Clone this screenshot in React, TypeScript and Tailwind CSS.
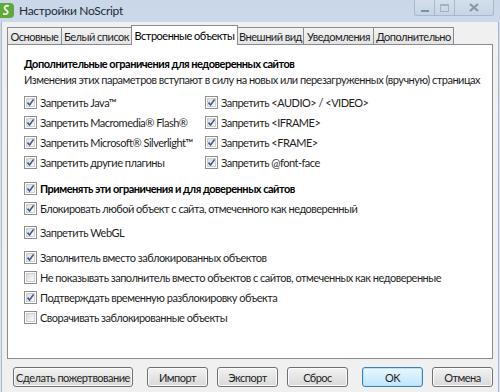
import React from 'react';

const Check: React.FC<{ checked?: boolean }> = ({ checked }) => (
  <span className="relative inline-flex h-[13px] w-[13px] shrink-0 items-center justify-center border border-[#8f8f8f] bg-white">
    <span className="absolute inset-[1px] border border-[#d0d0d0] bg-gradient-to-br from-[#dcdcdc] to-[#fbfbfb]" />
    {checked && (
      <svg viewBox="0 0 9 9" className="relative h-[9px] w-[9px]">
        <path d="M1.5 4.6 L3.6 7 L7.6 1.4" fill="none" stroke="#3f5a8f" strokeWidth="1.6" />
      </svg>
    )}
  </span>
);

const Row: React.FC<{ label: string; checked?: boolean; bold?: boolean; className?: string }> = ({
  label,
  checked = true,
  bold,
  className = '',
}) => (
  <div className={`flex h-[20px] items-center gap-[3px] ${className}`}>
    <Check checked={checked} />
    <span className={`whitespace-nowrap ${bold ? 'font-bold text-black' : 'text-[#1e1e1e]'}`}>{label}</span>
  </div>
);

const Btn: React.FC<{ label: string; w: string; def?: boolean }> = ({ label, w, def }) => (
  <button
    className={`h-[20px] ${w} whitespace-nowrap rounded-[3px] border bg-gradient-to-b text-[#1e1e1e] ${
      def
        ? 'border-[#3c7fb1] from-[#eaf6fd] to-[#bee6fd] shadow-[inset_0_0_0_1px_#b7e4f9]'
        : 'border-[#707070] from-[#f2f2f2] to-[#d9d9d9] shadow-[inset_0_0_0_1px_#fbfbfb]'
    }`}
  >
    {label}
  </button>
);

const tabs: [string, string][] = [
  ['Основные', 'w-[55px]'],
  ['Белый список', 'w-[71px]'],
  ['Встроенные объекты', 'w-[107px]'],
  ['Внешний вид', 'w-[67px]'],
  ['Уведомления', 'w-[71px]'],
  ['Дополнительно', 'w-[81px]'],
];

export default function App() {
  return (
    <div
      className="flex h-[392px] w-[500px] flex-col overflow-hidden bg-gradient-to-b from-[#c9d7e8] via-[#d9e3ef] to-[#dde6f0] text-[11px] leading-none tracking-[-0.5px]"
      style={{ fontFamily: 'Lato, "Noto Sans", sans-serif' }}
    >
      {/* title bar */}
      <div className="flex h-[22px] shrink-0 items-start">
        <div className="mt-[3px] h-[15px] w-[16px]">
          <svg viewBox="0 0 16 15" className="h-[15px] w-[16px]">
            <rect x="-3" y="0" width="17" height="15" rx="4" fill="#5fa83a" />
            <path d="M9 3 C5 2 3 5 6 7 C9 9 8 12 3 11" fill="none" stroke="#e8f5dc" strokeWidth="1.8" />
          </svg>
        </div>
        <span className="ml-[3px] mt-[5px] whitespace-nowrap text-[12px] tracking-[-0.3px] text-[#1e2a3a]">Настройки NoScript</span>
        <div className="ml-auto mr-[6px] flex h-[17px] items-start">
          <div className="flex h-[16px] w-[21px] items-end justify-center rounded-bl-[3px] border border-t-0 border-[#a9b8cb] bg-gradient-to-b from-[#d4dfec] to-[#c6d4e5] pb-[3px]">
            <div className="h-[2px] w-[8px] border border-[#7d8ea5]" />
          </div>
          <div className="flex h-[16px] w-[20px] items-center justify-center border border-l-0 border-t-0 border-[#a9b8cb] bg-gradient-to-b from-[#d4dfec] to-[#c6d4e5]">
            <div className="h-[8px] w-[9px] border border-t-2 border-[#a3b1c3]" />
          </div>
          <div className="flex h-[16px] w-[39px] items-center justify-center rounded-br-[3px] border border-l-0 border-t-0 border-[#a9b8cb] bg-gradient-to-b from-[#d4dfec] to-[#c6d4e5]">
            <svg viewBox="0 0 10 9" className="h-[9px] w-[10px]">
              <path d="M1 1 L9 8 M9 1 L1 8" stroke="#8796ab" strokeWidth="2.2" />
            </svg>
          </div>
        </div>
      </div>

      {/* window client area */}
      <div className="mx-[1px] flex flex-1 flex-col border-l border-r border-[#aab8c9] bg-[#f0f0f0] px-[5px] pb-[6px]">
        {/* tabs */}
        <div className="mt-[5px] flex h-[17px] shrink-0 items-end">
          {tabs.map(([t, w], i) =>
            i === 2 ? (
              <div
                key={t}
                className={`relative z-10 -mb-px -ml-px flex h-[20px] ${w} items-center justify-center whitespace-nowrap border border-b-0 border-[#898c95] bg-white text-black`}
              >
                {t}
              </div>
            ) : (
              <div
                key={t}
                className={`flex h-[17px] ${w} items-center justify-center whitespace-nowrap border border-b-0 border-[#898c95] bg-gradient-to-b from-[#f3f3f3] to-[#e3e3e3] text-[#1e1e1e] ${
                  i > 0 ? '-ml-px' : ''
                }`}
              >
                {t}
              </div>
            ),
          )}
        </div>

        {/* panel */}
        <div className="flex h-[315px] shrink-0 flex-col border border-[#898c95] bg-white pl-[16px] pt-[10px]">
          <div className="flex h-[16px] items-center whitespace-nowrap font-bold text-black">
            Дополнительные ограничения для недоверенных сайтов
          </div>
          <div className="flex h-[16px] items-center whitespace-nowrap text-[#1e1e1e]">
            Изменения этих параметров вступают в силу на новых или перезагруженных (вручную) страницах
          </div>

          <div className="mt-[5px] grid grid-cols-[181px_1fr]">
            <Row label="Запретить Java™" />
            <Row label="Запретить <AUDIO> / <VIDEO>" />
            <Row label="Запретить Macromedia® Flash®" />
            <Row label="Запретить <IFRAME>" />
            <Row label="Запретить Microsoft® Silverlight™" />
            <Row label="Запретить <FRAME>" />
            <Row label="Запретить другие плагины" />
            <Row label="Запретить @font-face" />
          </div>

          <Row className="mt-[6px]" bold label="Применять эти ограничения и для доверенных сайтов" />
          <Row label="Блокировать любой объект с сайта, отмеченного как недоверенный" />

          <Row className="mt-[4px]" label="Запретить WebGL" />

          <Row className="mt-[5px]" label="Заполнитель вместо заблокированных объектов" />
          <Row checked={false} label="Не показывать заполнитель вместо объектов с сайтов, отмеченных как недоверенные" />
          <Row label="Подтверждать временную разблокировку объекта" />
          <Row checked={false} label="Сворачивать заблокированные объекты" />
        </div>

        {/* buttons */}
        <div className="mt-[8px] flex items-center pl-[6px]">
          <Btn label="Сделать пожертвование" w="w-[121px]" />
          <div className="ml-[14px] flex gap-[9px]">
            <Btn label="Импорт" w="w-[61px]" />
            <Btn label="Экспорт" w="w-[61px]" />
            <Btn label="Сброс" w="w-[61px]" />
          </div>
          <div className="ml-[14px] flex gap-[9px]">
            <Btn def label="OK" w="w-[61px]" />
            <Btn label="Отмена" w="w-[61px]" />
          </div>
        </div>
      </div>
    </div>
  );
}
